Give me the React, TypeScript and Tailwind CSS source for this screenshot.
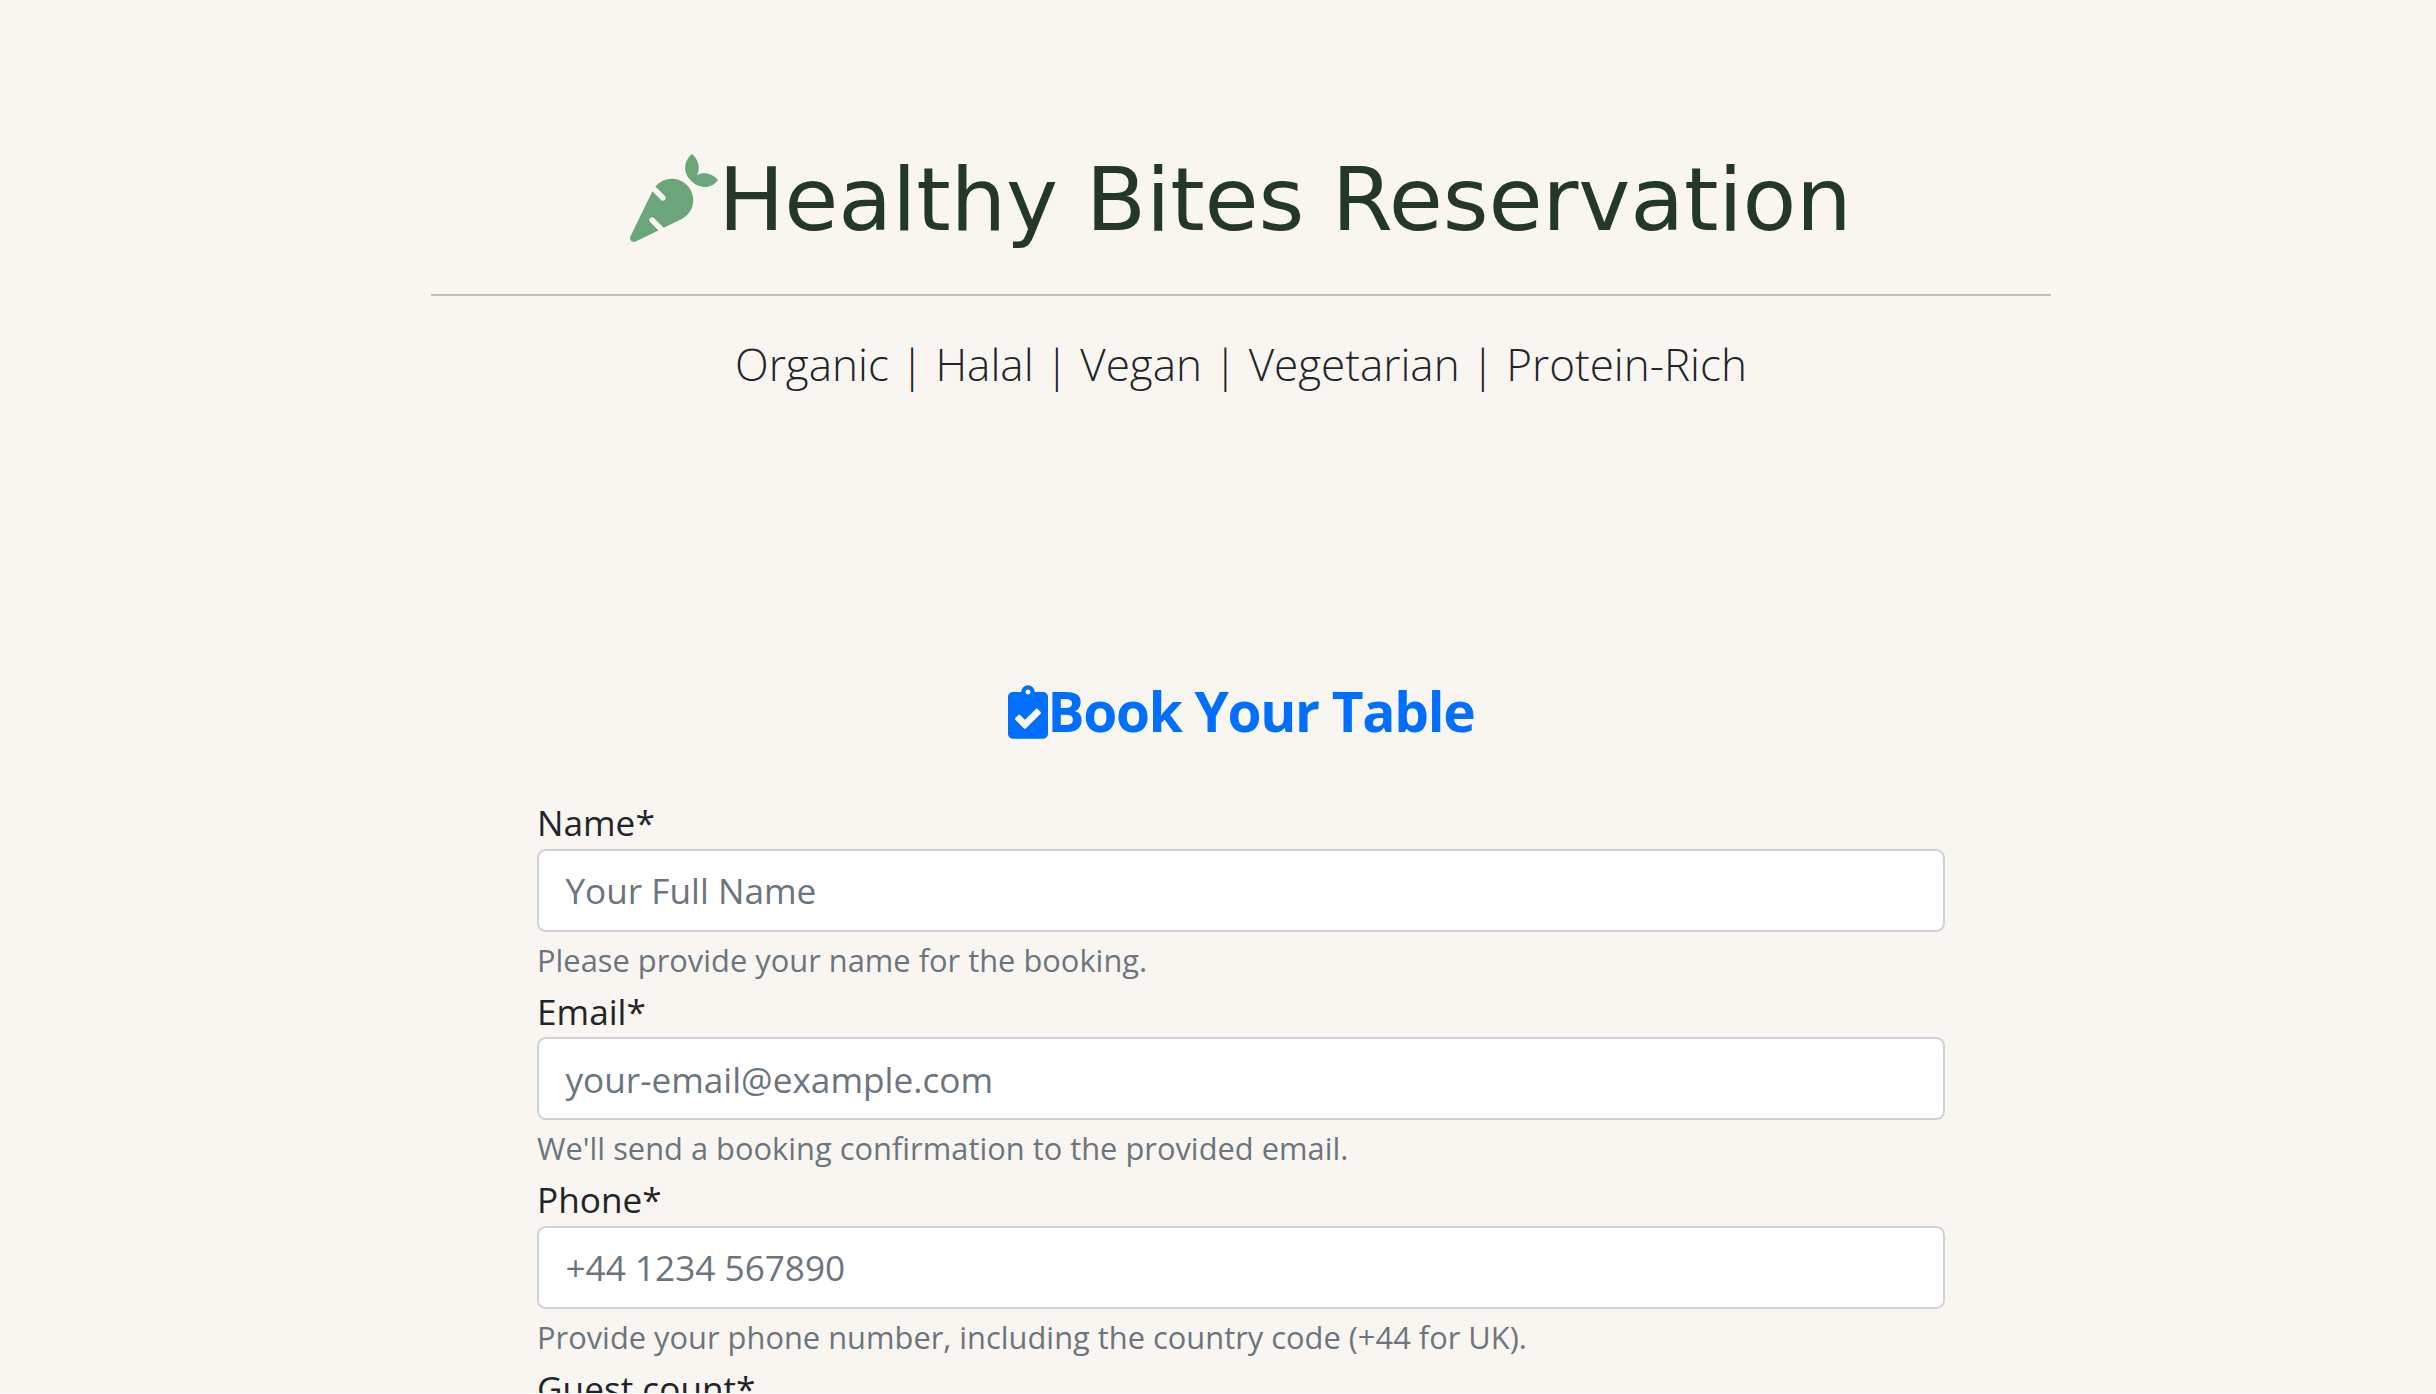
import { FaCarrot, FaClipboardCheck } from "react-icons/fa";

const fields = [
  { id: "name", label: "Name*", placeholder: "Your Full Name", help: "Please provide your name for the booking." },
  { id: "email", label: "Email*", placeholder: "your-email@example.com", help: "We'll send a booking confirmation to the provided email." },
  { id: "phone", label: "Phone*", placeholder: "+44 1234 567890", help: "Provide your phone number, including the country code (+44 for UK)." },
  { id: "guests", label: "Guest count*", placeholder: "", help: "" },
];

function Field({ id, label, placeholder, help }: (typeof fields)[number]) {
  return (
    <div className="h-[188.6px]">
      <label htmlFor={id} className="block leading-[52.8px]">{label}</label>
      <input
        id={id}
        placeholder={placeholder}
        className="block h-[83px] w-full rounded-[8.8px] border-2 border-[#ced2d6] bg-white px-[26.4px] outline-none placeholder:text-[#6c757d]"
      />
      <div className="leading-[52.8px]">
        <small className="text-[30.8px] tracking-[0.02px] text-[#6c757d]">{help}</small>
      </div>
    </div>
  );
}

export default function App() {
  return (
    <div className="h-[1394px] overflow-hidden bg-white font-['Open_Sans',sans-serif] text-[35.2px] text-[#212529]">
      <div className="h-[1393px] overflow-hidden bg-[#f9f6f1] pl-[431px]">
        <header className="flex h-[679px] w-[1620px] flex-col items-center pt-[145px]">
          <h1 className="flex h-[106px] items-center whitespace-nowrap font-['DejaVu_Sans',sans-serif] text-[88px] leading-[106px] tracking-[-0.2px] text-[#23372b]">
            <FaCarrot className="size-[88px] shrink-0 text-[#6ba57a]" />
            <span className="pt-1">Healthy Bites Reservation</span>
          </h1>
          <hr className="mt-[43px] w-full border-t-2 border-[#c2bfb9]" />
          <p className="mt-[35px] whitespace-nowrap text-[44px] font-light leading-[66px]">
            Organic | Halal | Vegan | Vegetarian | Protein-Rich
          </p>
        </header>
        <main className="ml-[106px] w-[1408px]">
          <h2 className="mb-[52px] flex h-[65px] items-center justify-center whitespace-nowrap text-[55px] font-bold leading-[65px] tracking-[-1.3px] text-[#006ffd]">
            <FaClipboardCheck className="h-[54px] w-[40px] shrink-0" />
            <span className="pb-0.5">Book Your Table</span>
          </h2>
          <form>
            {fields.map((f) => (
              <Field key={f.id} {...f} />
            ))}
          </form>
        </main>
      </div>
    </div>
  );
}
